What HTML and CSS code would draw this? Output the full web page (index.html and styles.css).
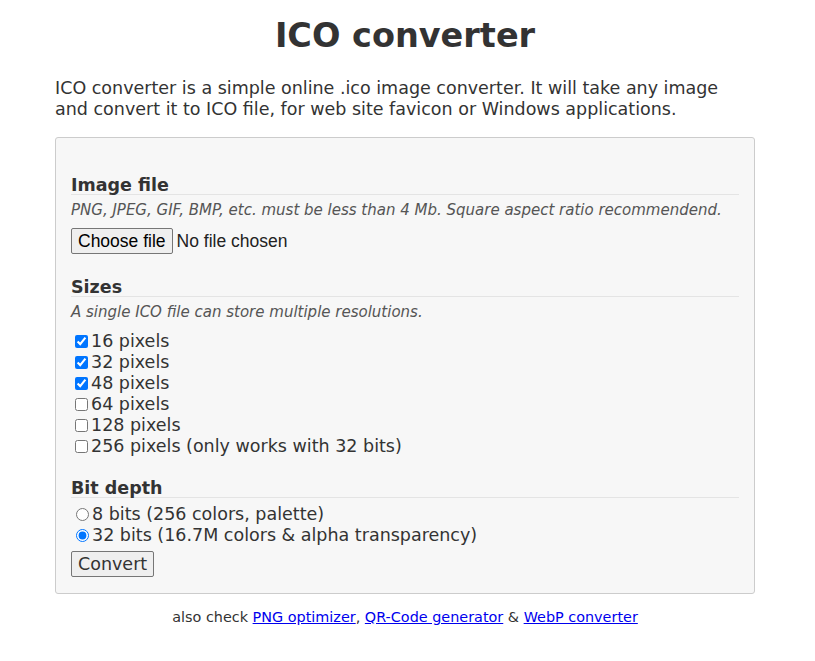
FILE: index.html
```html
<!DOCTYPE html>
<html>
<head>
<meta charset="utf-8">
<title>ICO converter</title>
<link rel="stylesheet" href="styles.css">
</head>
<body>
<div class="page">
  <h1 class="title">ICO converter</h1>
  <p class="intro">ICO converter is a simple online .ico image converter. It will take any image and convert it to ICO file, for web site favicon or Windows applications.</p>
  <form class="panel">
    <div class="section first">
      <div class="legend">Image file</div>
      <div class="hint">PNG, JPEG, GIF, BMP, etc. must be less than 4 Mb. Square aspect ratio recommendend.</div>
      <div class="file-row">
        <button type="button" class="file-btn">Choose file</button>
        <span class="file-name">No file chosen</span>
      </div>
    </div>
    <div class="section sizes">
      <div class="legend">Sizes</div>
      <div class="hint">A single ICO file can store multiple resolutions.</div>
      <div class="options checks">
        <label class="opt"><input type="checkbox" checked>16 pixels</label>
        <label class="opt"><input type="checkbox" checked>32 pixels</label>
        <label class="opt"><input type="checkbox" checked>48 pixels</label>
        <label class="opt"><input type="checkbox">64 pixels</label>
        <label class="opt"><input type="checkbox">128 pixels</label>
        <label class="opt"><input type="checkbox">256 pixels (only works with 32 bits)</label>
      </div>
    </div>
    <div class="section depth">
      <div class="legend">Bit depth</div>
      <div class="options radios">
        <label class="opt"><input type="radio" name="bits">8 bits (256 colors, palette)</label>
        <label class="opt"><input type="radio" name="bits" checked>32 bits (16.7M colors &amp; alpha transparency)</label>
      </div>
      <div class="submit-row"><button type="button" class="btn">Convert</button></div>
    </div>
  </form>
  <p class="footer">also check <a href="#">PNG optimizer</a>, <a href="#">QR-Code generator</a> &amp; <a href="#">WebP converter</a></p>
</div>
</body>
</html>
```
FILE: styles.css
```css
html, body {
  margin: 0;
  padding: 0;
  background: #fff;
}
body {
  padding-right: 5px;
  font-family: "DejaVu Sans", Verdana, sans-serif;
  color: #333;
}
.page {
  width: 700px;
  margin: 0 auto;
}
.title {
  font-size: 33.5px;
  font-weight: bold;
  text-align: center;
  margin: 0;
  padding-top: 17px;
  line-height: 38px;
}
.intro {
  font-size: 17.5px;
  line-height: 21px;
  margin: 23px 0 17px;
}
.panel {
  background: #f7f7f7;
  border: 1px solid #ccc;
  border-radius: 3px;
  padding: 35px 15px 16px;
}
.section.sizes {
  margin-top: 21px;
}
.section.depth {
  margin-top: 19px;
}
.legend {
  font-size: 17.5px;
  font-weight: bold;
  line-height: 17px;
  padding-top: 4px;
  border-bottom: 1px solid #e4e4e4;
}
.hint {
  font-size: 15px;
  font-style: italic;
  color: #555;
  line-height: 20px;
  margin-top: 5px;
}
.file-row {
  margin-top: 8px;
  display: flex;
  align-items: center;
  gap: 4px;
}
.file-btn {
  font-family: "Liberation Sans", Arial, sans-serif;
  font-size: 17.5px;
  color: #000;
  background: #efefef;
  border: 1px solid #767676;
  border-radius: 2px;
  padding: 1px 6px;
  line-height: 22px;
  height: 26px;
}
.file-name {
  font-family: "Liberation Sans", Arial, sans-serif;
  font-size: 17.5px;
  color: #222;
}
.options {
  display: flex;
  flex-direction: column;
  font-size: 17.5px;
  line-height: 21px;
}
.checks {
  margin-top: 9px;
}
.radios {
  margin-top: 6px;
}
.opt {
  display: block;
  height: 21px;
}
.opt input[type=checkbox] {
  margin: 3px 3px 3px 4px;
  width: 13px;
  height: 13px;
  vertical-align: -1px;
}
.opt input[type=radio] {
  margin: 3px 3px 0 5px;
  width: 13px;
  height: 13px;
  vertical-align: -1px;
}
.submit-row {
  margin-top: 5px;
  display: flex;
}
.btn {
  font-family: "DejaVu Sans", Verdana, sans-serif;
  font-size: 17.5px;
  color: #333;
  background: #efefef;
  border: 1px solid #767676;
  border-radius: 2px;
  padding: 1px 6px;
  line-height: 22px;
  height: 26px;
}
.footer {
  font-size: 14.4px;
  text-align: center;
  margin: 13px 0 0;
  line-height: 20px;
}
.footer a {
  color: #0000ee;
}
```
